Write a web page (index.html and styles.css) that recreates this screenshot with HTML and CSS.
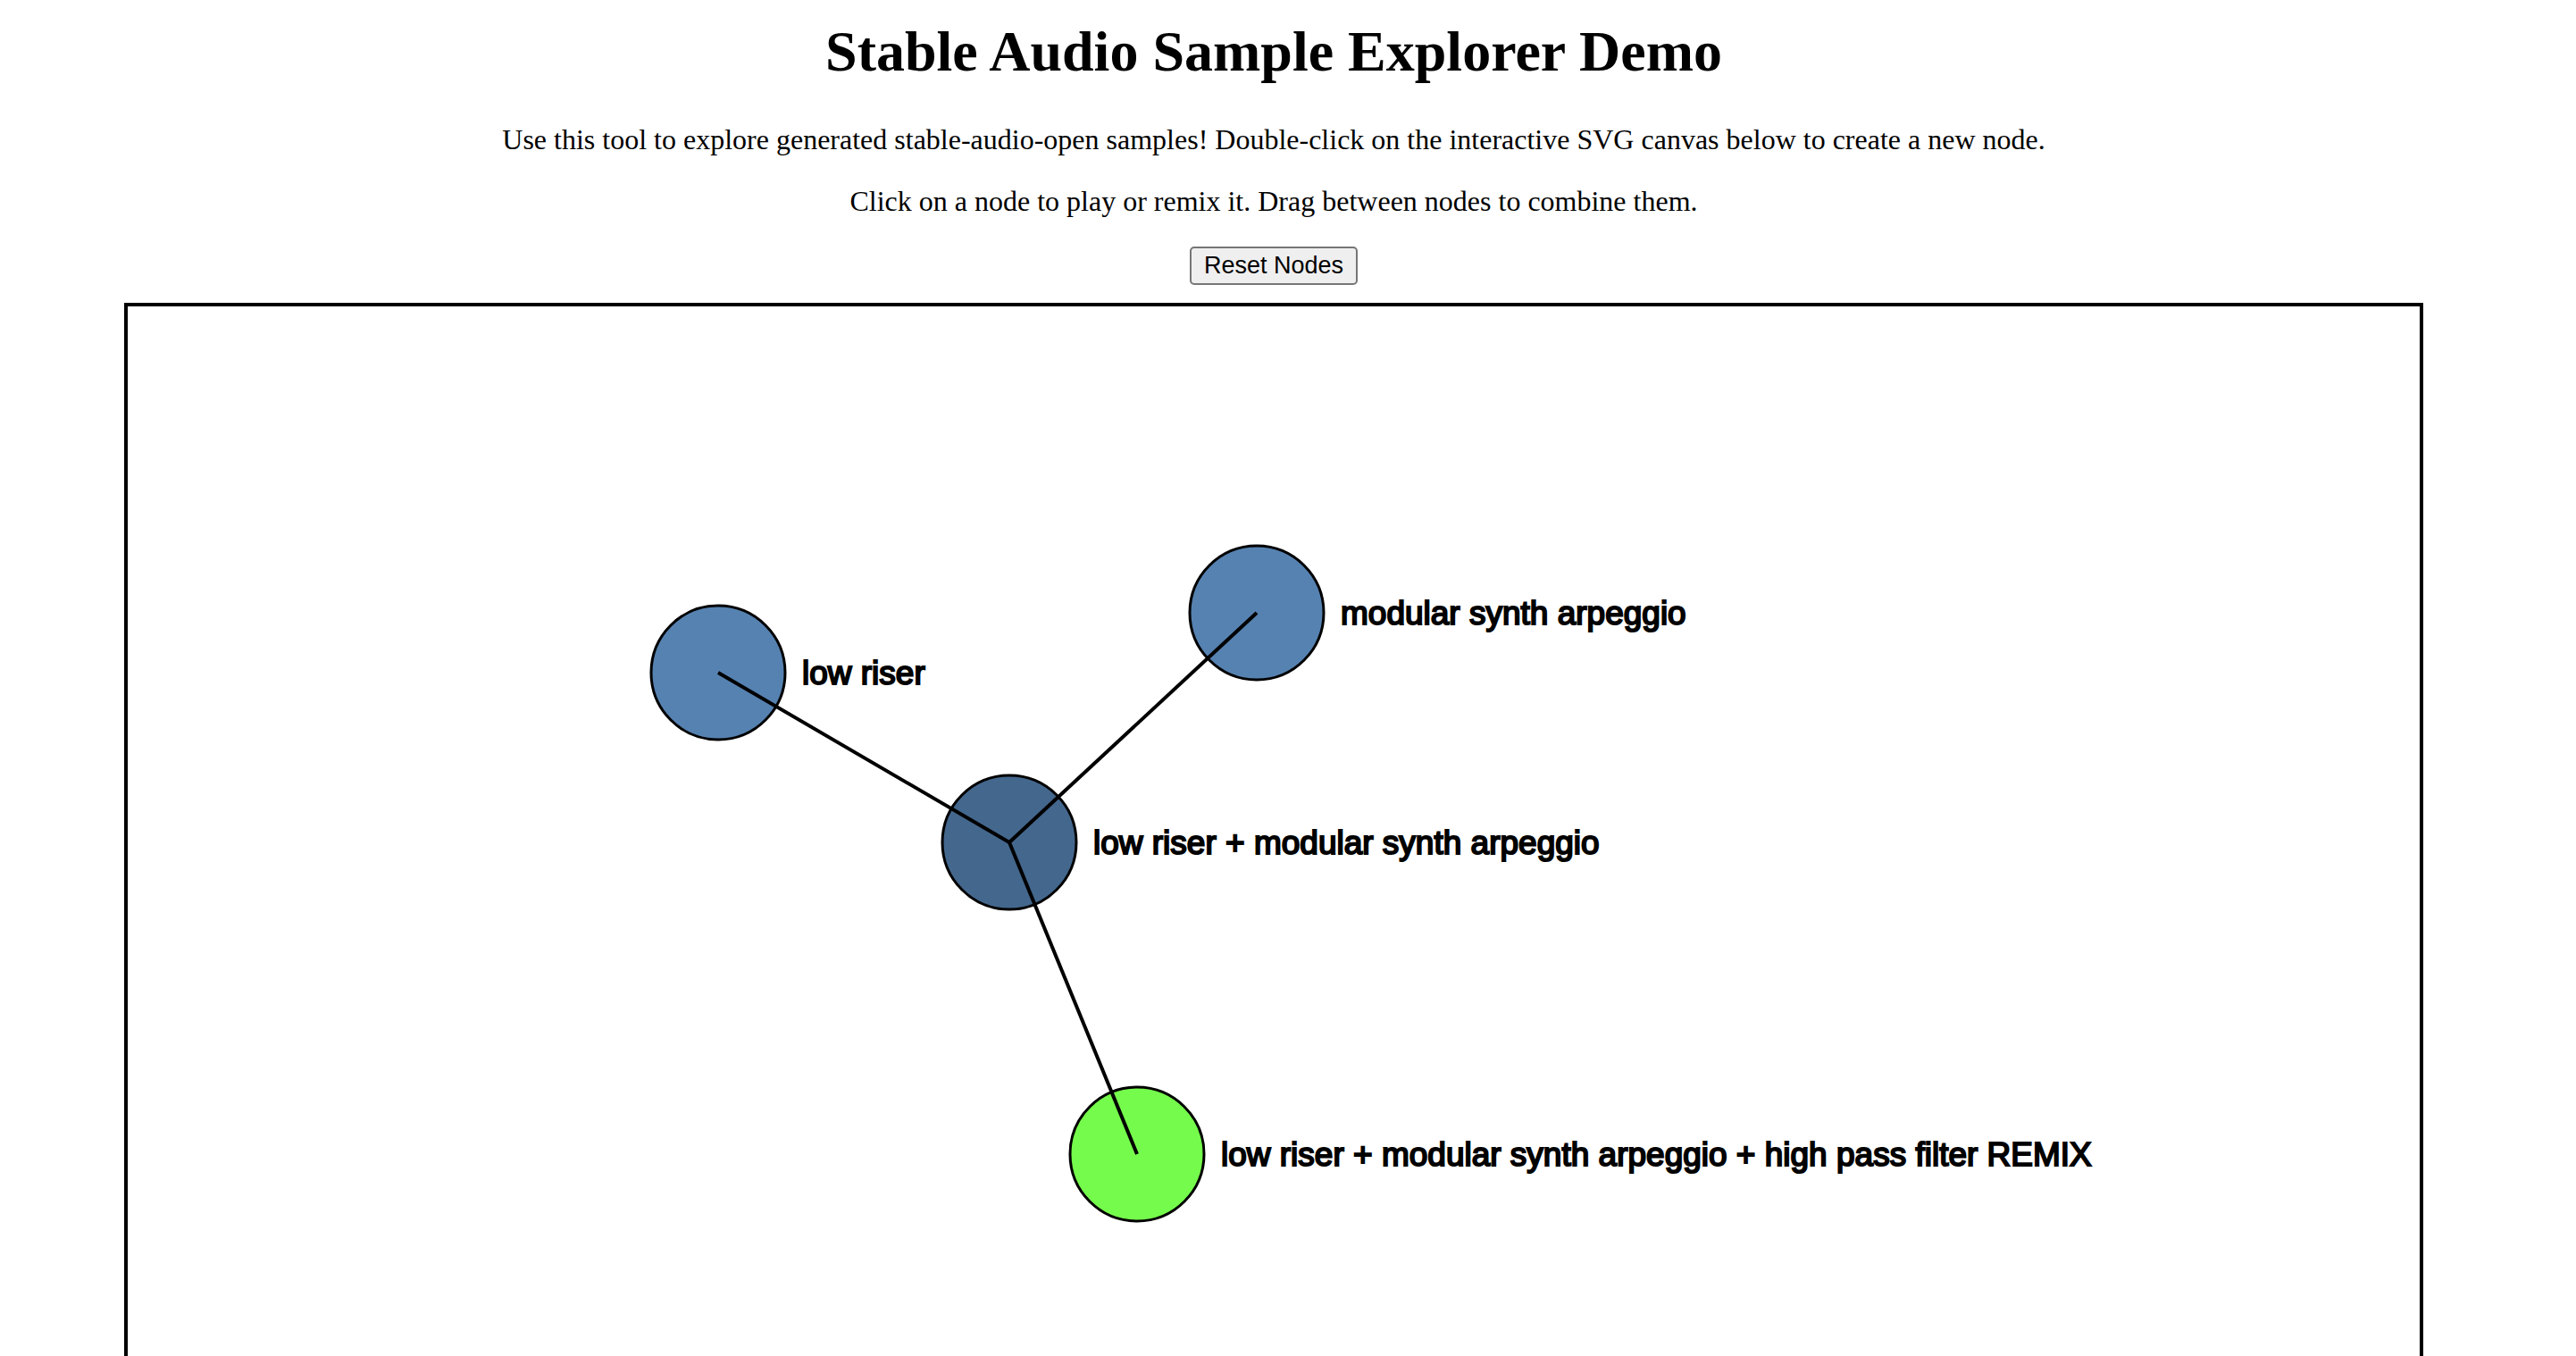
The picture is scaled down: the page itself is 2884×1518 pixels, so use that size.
FILE: index.html
```html
<!DOCTYPE html>
<html lang="en">
<head>
<meta charset="utf-8">
<title>Stable Audio Sample Explorer Demo</title>
<link rel="stylesheet" href="styles.css">
</head>
<body>
<main class="page">
  <h1 class="title">Stable Audio Sample Explorer Demo</h1>
  <p class="intro">Use this tool to explore generated stable-audio-open samples! Double-click on the interactive SVG canvas below to create a new node.</p>
  <p class="intro">Click on a node to play or remix it. Drag between nodes to combine them.</p>
  <button class="reset" type="button">Reset Nodes</button>
  <svg class="canvas" role="img" aria-label="Sample nodes">
    <g class="nodes">
      <circle class="node" cx="661" cy="410" r="75"/>
      <circle class="node" cx="1264" cy="343" r="75"/>
      <circle class="node node-combined" cx="987" cy="600" r="75"/>
      <circle class="node node-remix" cx="1130" cy="949" r="75"/>
    </g>
    <g class="links">
      <line x1="661" y1="410" x2="987" y2="600"/>
      <line x1="1264" y1="343" x2="987" y2="600"/>
      <line x1="987" y1="600" x2="1130" y2="949"/>
    </g>
    <g class="labels">
      <text x="755" y="423">low riser</text>
      <text x="1358" y="356">modular synth arpeggio</text>
      <text x="1081" y="613">low riser + modular synth arpeggio</text>
      <text x="1224" y="962">low riser + modular synth arpeggio + high pass filter REMIX</text>
    </g>
  </svg>
</main>
</body>
</html>
```
FILE: styles.css
```css
body {
  box-sizing: border-box;
  height: 100vh;
  margin: 0;
  padding-right: 32px;
  overflow: hidden;
  background: #fff;
  color: #000;
  font-family: "Liberation Serif", "Times New Roman", serif;
}

.page {
  display: flex;
  flex-direction: column;
  align-items: center;
  padding-top: 21px;
}

.title {
  margin: 0 0 43px;
  font-size: 64px;
  line-height: 74px;
}

.intro {
  margin: 0 0 32px;
  font-size: 32px;
  line-height: 37px;
}

.reset {
  box-sizing: border-box;
  height: 43px;
  margin: 0 0 20px;
  padding: 0 14px;
  border: 2px solid #767676;
  border-radius: 5px;
  background: #efefef;
  color: #000;
  font-family: "Liberation Sans", Arial, sans-serif;
  font-size: 27px;
  line-height: 39px;
}

.canvas {
  flex: none;
  width: 90%;
  height: 80vh;
  border: 4px solid #000;
}

.node {
  fill: #5682b1;
  stroke: #000;
  stroke-width: 3px;
}

.node-combined {
  fill: #44678d;
}

.node-remix {
  fill: #75fb4c;
}

.links {
  stroke: #000;
  stroke-width: 4px;
}

.labels {
  stroke: #000;
  stroke-width: 2px;
  font-family: "Liberation Sans", Helvetica, Arial, sans-serif;
  font-size: 37px;
}
```
